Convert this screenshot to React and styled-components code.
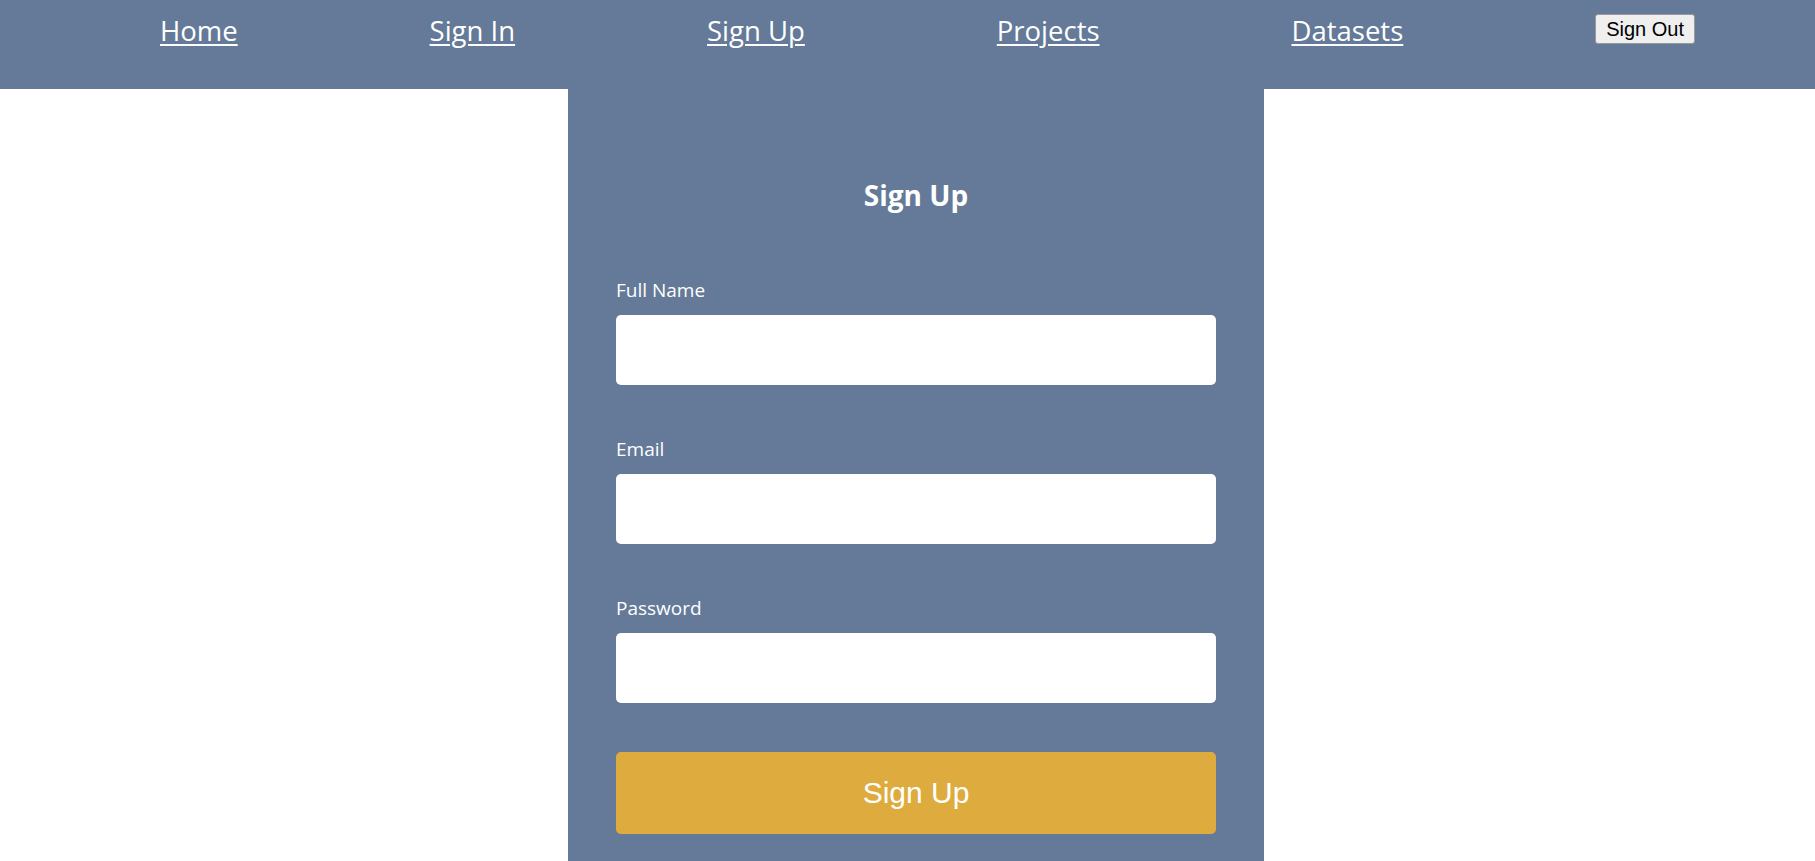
import React from 'react'
import styled, { createGlobalStyle } from 'styled-components'

const GlobalStyle = createGlobalStyle`
  * {
    box-sizing: border-box;
  }
  body {
    margin: 0;
    background-color: white;
    font-family: "Open Sans", "Noto Sans", sans-serif;
  }
`

const Header = styled.header`
  height: 89px;
  background-color: #647a98;
  display: flex;
  justify-content: space-around;
  align-items: flex-start;
  padding: 12px 24px 0 64px;
`

const NavLink = styled.a`
  color: white;
  font-size: 27.5px;
  line-height: 37px;
  text-decoration: underline;
  text-underline-offset: 3px;
  text-decoration-thickness: 2px;
  cursor: pointer;
`

const SignOut = styled.button`
  margin-top: 2px;
  font-family: "Liberation Sans", Arial, sans-serif;
  font-size: 20px;
  line-height: 23px;
  color: black;
  background-color: #efefef;
  border: 1px solid #9a9a9a;
  border-radius: 3px;
  padding: 3px 10px 2px;
  cursor: pointer;
`

const Main = styled.main`
  display: flex;
  justify-content: center;
  padding-left: 17px;
`

const Panel = styled.section`
  width: 696px;
  min-height: calc(100vh - 89px);
  background-color: #647a98;
  padding: 87px 48px 40px;
  color: white;
`

const Title = styled.h1`
  margin: 0 0 64px;
  text-align: center;
  font-size: 28px;
  font-weight: 700;
  line-height: 38px;
`

const Form = styled.form`
  display: flex;
  flex-direction: column;
  gap: 52px;
`

const Field = styled.div`
  display: flex;
  flex-direction: column;
  gap: 12px;
`

const Label = styled.label`
  font-size: 19px;
  line-height: 25px;
`

const Input = styled.input`
  height: 70px;
  width: 100%;
  border: none;
  border-radius: 5px;
  background-color: white;
  padding: 0 14px;
  font-size: 18px;
  outline: none;
`

const Submit = styled.button`
  margin-top: -3px;
  height: 82px;
  width: 100%;
  border: none;
  border-radius: 5px;
  background-color: #deac3e;
  color: white;
  font-family: "Liberation Sans", Arial, sans-serif;
  font-size: 30px;
  cursor: pointer;
`

const links = ['Home', 'Sign In', 'Sign Up', 'Projects', 'Datasets']

const fields = [
  { id: 'fullname', label: 'Full Name', type: 'text' },
  { id: 'email', label: 'Email', type: 'email' },
  { id: 'password', label: 'Password', type: 'password' }
]

function App () {
  return (
    <>
      <GlobalStyle />
      <Header>
        {links.map(link => (
          <NavLink key={link} href='#'>{link}</NavLink>
        ))}
        <SignOut type='button'>Sign Out</SignOut>
      </Header>
      <Main>
        <Panel>
          <Title>Sign Up</Title>
          <Form onSubmit={e => e.preventDefault()}>
            {fields.map(f => (
              <Field key={f.id}>
                <Label htmlFor={f.id}>{f.label}</Label>
                <Input id={f.id} type={f.type} />
              </Field>
            ))}
            <Submit type='submit'>Sign Up</Submit>
          </Form>
        </Panel>
      </Main>
    </>
  )
}

export default App
